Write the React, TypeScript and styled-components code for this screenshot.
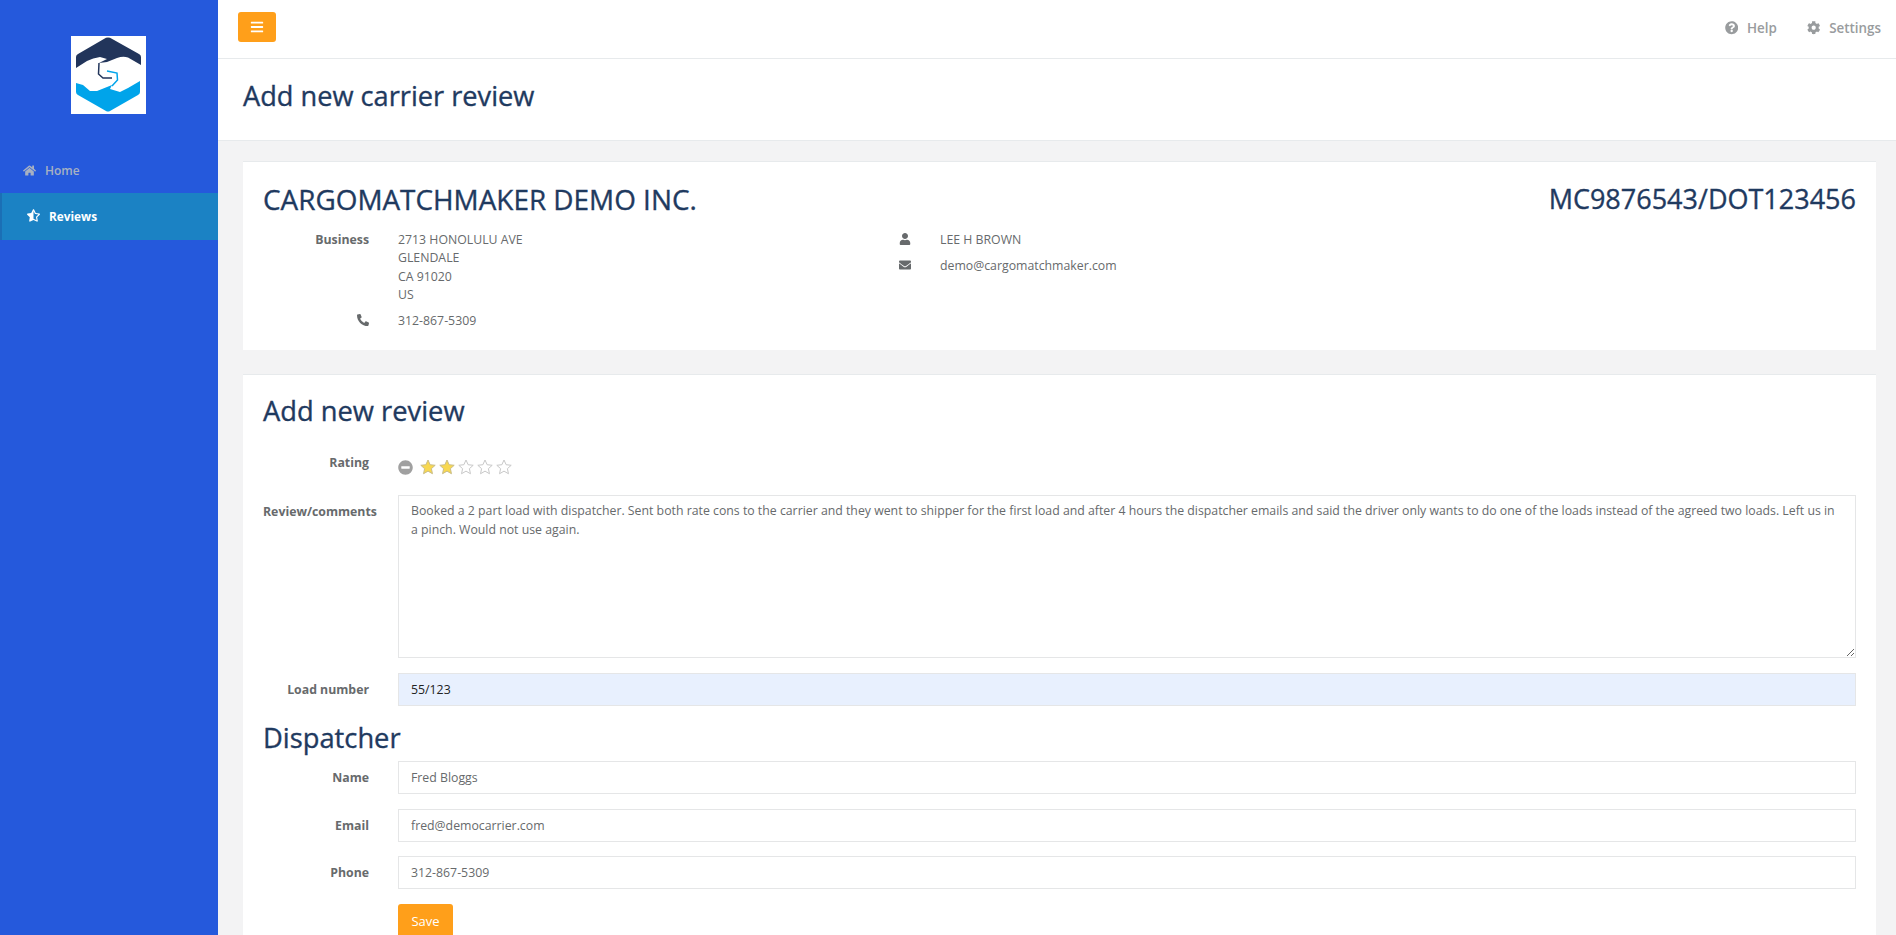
import React from "react";
import styled, { createGlobalStyle } from "styled-components";
import {
  FaBars,
  FaCog,
  FaEnvelope,
  FaHome,
  FaMinusCircle,
  FaPhoneAlt,
  FaQuestionCircle,
  FaStarHalfAlt,
  FaUser,
} from "react-icons/fa";

const GlobalStyle = createGlobalStyle`
  html, body {
    margin: 0;
    height: 100%;
    overflow: hidden;
  }
  body {
    font-family: "Open Sans", "Noto Sans", sans-serif;
    font-size: 12.3px;
    color: #676a6c;
    background: #f3f3f4;
  }
  * { box-sizing: border-box; }
`;

const Shell = styled.div`
  display: flex;
  height: 935px;
  overflow: hidden;
`;

const Sidebar = styled.nav`
  width: 218px;
  flex-shrink: 0;
  background: #2559dc;
`;

const LogoWrap = styled.div`
  display: flex;
  padding: 36px 0 0 71px;
  height: 148px;
`;

const LogoBox = styled.div`
  width: 75px;
  height: 78px;
  background: #fff;
  display: flex;
`;

const NavItem = styled.a<{ $active?: boolean }>`
  display: flex;
  align-items: center;
  height: ${(p) => (p.$active ? "47px" : "45px")};
  padding-left: ${(p) => (p.$active ? "25px" : "23px")};
  padding-bottom: ${(p) => (p.$active ? "2px" : "0")};
  gap: 9px;
  font-size: ${(p) => (p.$active ? "11.8px" : "12px")};
  font-weight: ${(p) => (p.$active ? 700 : 600)};
  color: ${(p) => (p.$active ? "#fff" : "#a7b1c2")};
  background: ${(p) => (p.$active ? "#1b82c4" : "transparent")};
  border-left: ${(p) => (p.$active ? "2px solid #1b6fb5" : "none")};
  svg {
    font-size: 13px;
  }
`;

const Main = styled.div`
  flex: 1;
  min-width: 0;
  display: flex;
  flex-direction: column;
`;

const TopBar = styled.header`
  height: 59px;
  flex-shrink: 0;
  background: #fff;
  border-bottom: 1px solid #e7eaec;
  display: flex;
  justify-content: space-between;
  padding: 12px 15px 0 20px;
`;

const MenuButton = styled.button`
  width: 38px;
  height: 30px;
  border: none;
  border-radius: 3px;
  background: #ff9f1a;
  color: #fff;
  font-size: 14px;
  display: flex;
  align-items: center;
  justify-content: center;
  padding: 0;
`;

const TopLinks = styled.div`
  display: flex;
  gap: 30px;
  padding-top: 8px;
`;

const TopLink = styled.a`
  display: flex;
  align-items: center;
  gap: 9px;
  height: 16px;
  font-size: 13.4px;
  font-weight: 600;
  color: #999c9e;
`;

const TitleBand = styled.div`
  height: 82px;
  flex-shrink: 0;
  background: #fff;
  border-bottom: 1px solid #e7eaec;
  padding: 0 0 0 25px;
  display: flex;
  align-items: center;
`;

const PageTitle = styled.h1`
  margin: 0 0 9px 0;
  font-size: 27.2px;
  font-weight: 400;
  -webkit-text-stroke: 0.35px #1f3a5f;
  color: #1f3a5f;
`;

const Content = styled.main`
  flex: 1;
  padding: 20px 20px 0 25px;
  display: flex;
  flex-direction: column;
  gap: 24px;
`;

const Card = styled.section`
  background: #fff;
  border-top: 1px solid #e7eaec;
  padding: 19px 20px 0 20px;
`;

const CompanyCard = styled(Card)`
  height: 189px;
`;

const FormCard = styled(Card)`
  flex: 1;
  padding-top: 18px;
`;

const HeadRow = styled.div`
  display: flex;
  justify-content: space-between;
  margin-bottom: 13.5px;
`;

const Heading = styled.h2<{ $size?: number }>`
  margin: 0;
  font-size: ${(p) => p.$size ?? 27.3}px;
  line-height: 36px;
  font-weight: 400;
  -webkit-text-stroke: 0.35px #1f3a5f;
  color: #1f3a5f;
`;

const ReviewHeading = styled(Heading)`
  margin-bottom: 17px;
`;

const DispatcherHeading = styled(Heading)`
  margin-bottom: 5px;
`;

const InfoGrid = styled.div`
  display: grid;
  grid-template-columns: 542px 1fr;
`;

const InfoColumn = styled.div`
  display: flex;
  flex-direction: column;
  gap: 7.5px;
`;

const InfoRow = styled.div`
  display: grid;
  grid-template-columns: 106px 1fr;
  column-gap: 29px;
  line-height: 18.6px;
`;

const InfoLabel = styled.div`
  text-align: right;
  font-weight: 700;
  svg {
    font-size: 12px;
    vertical-align: -1px;
  }
`;

const FieldRow = styled.div<{ $mb?: number }>`
  display: grid;
  grid-template-columns: 106px 1fr;
  column-gap: 29px;
  margin-bottom: ${(p) => p.$mb ?? 15}px;
`;

const FieldLabel = styled.label`
  text-align: right;
  font-weight: 700;
  white-space: nowrap;
  padding-top: 8px;
  line-height: 18px;
`;

const RatingBox = styled.div`
  display: flex;
  align-items: center;
  gap: 3px;
  height: 26px;
  margin-top: 8px;
  color: #a0a0a0;
  svg.clear {
    font-size: 15px;
    margin-right: 4px;
  }
`;

const Field = styled.input<{ $filled?: boolean }>`
  display: block;
  width: 100%;
  height: 33px;
  border: 1px solid #e5e6e7;
  padding: 0 12px;
  font: inherit;
  color: ${(p) => (p.$filled ? "#222" : "#676a6c")};
  background: ${(p) => (p.$filled ? "#e8f0fe" : "#fff")};
  outline: none;
`;

const Comments = styled.textarea`
  display: block;
  width: 100%;
  height: 163px;
  border: 1px solid #e5e6e7;
  padding: 6px 12px;
  font: inherit;
  line-height: 18.6px;
  color: #676a6c;
  background: #fff;
  outline: none;
`;

const SaveButton = styled.button`
  margin-left: 135px;
  width: 55px;
  height: 33px;
  border: none;
  border-radius: 3px;
  background: #ff9f1a;
  color: #fff;
  font: inherit;
  font-size: 13px;
  padding: 0;
`;

const Star = ({ on }: { on: boolean }) => (
  <svg width="16" height="16" viewBox="0 0 24 24">
    <path
      d="M12 1.5l3.2 7.1 7.6.8-5.7 5.1 1.6 7.6L12 18.2l-6.7 3.9 1.6-7.6-5.700-5.100 7.600-.8z"
      fill={on ? "#f8d850" : "#fff"}
      stroke={on ? "#c9bd8a" : "#c8c8c8"}
      strokeWidth="1.5"
      strokeLinejoin="round"
    />
  </svg>
);

const Logo = () => (
  <svg width="75" height="78" viewBox="0 0 75 78">
    <path
      d="M35 1.800 Q37 1 39 1.800 L68 18 Q70 19 70 21 L70 29 L57 21.500 Q52 20 46 22 L36 26 L28 27 L36 23 L29 21 Q22 22 16 25 L5 32 L5 21 Q5 19 7 18 Z"
      fill="#22355b"
    />
    <path
      d="M5 47 L12 49 L19 55 L26 55 L41 49 L39 53 L49 56 L57 52 L69 45 L69 56 Q69 58 67 59 L39 75 Q37 76 35 75 L7 59 Q5 58 5 56 Z"
      fill="#00a4ea"
    />
    <path d="M28 27 L27.500 38 L32 42 L41 42" fill="none" stroke="#22355b" strokeWidth="1.500" />
    <path d="M36 35 L46 37 L46.500 44 L41 50" fill="none" stroke="#00a4ea" strokeWidth="1.500" />
  </svg>
);

export default function App() {
  const comments =
    "Booked a 2 part load with dispatcher. Sent both rate cons to the carrier and they went to shipper for the first load and after 4 hours the dispatcher emails and said the driver only wants to do one of the loads instead of the agreed two loads. Left us in a pinch. Would not use again.";

  return (
    <Shell>
      <GlobalStyle />
      <Sidebar>
        <LogoWrap>
          <LogoBox>
            <Logo />
          </LogoBox>
        </LogoWrap>
        <NavItem>
          <FaHome />
          Home
        </NavItem>
        <NavItem $active>
          <FaStarHalfAlt />
          Reviews
        </NavItem>
      </Sidebar>
      <Main>
        <TopBar>
          <MenuButton>
            <FaBars />
          </MenuButton>
          <TopLinks>
            <TopLink>
              <FaQuestionCircle />
              Help
            </TopLink>
            <TopLink>
              <FaCog />
              Settings
            </TopLink>
          </TopLinks>
        </TopBar>
        <TitleBand>
          <PageTitle>Add new carrier review</PageTitle>
        </TitleBand>
        <Content>
          <CompanyCard>
            <HeadRow>
              <Heading $size={27.9}>CARGOMATCHMAKER DEMO INC.</Heading>
              <Heading $size={27}>MC9876543/DOT123456</Heading>
            </HeadRow>
            <InfoGrid>
              <InfoColumn>
                <InfoRow>
                  <InfoLabel>Business</InfoLabel>
                  <div>
                    2713 HONOLULU AVE
                    <br />
                    GLENDALE
                    <br />
                    CA 91020
                    <br />
                    US
                  </div>
                </InfoRow>
                <InfoRow>
                  <InfoLabel>
                    <FaPhoneAlt />
                  </InfoLabel>
                  <div>312-867-5309</div>
                </InfoRow>
              </InfoColumn>
              <InfoColumn>
                <InfoRow>
                  <InfoLabel>
                    <FaUser />
                  </InfoLabel>
                  <div>LEE H BROWN</div>
                </InfoRow>
                <InfoRow>
                  <InfoLabel>
                    <FaEnvelope />
                  </InfoLabel>
                  <div>demo@cargomatchmaker.com</div>
                </InfoRow>
              </InfoColumn>
            </InfoGrid>
          </CompanyCard>
          <FormCard>
            <ReviewHeading>Add new review</ReviewHeading>
            <FieldRow>
              <FieldLabel>Rating</FieldLabel>
              <RatingBox>
                <FaMinusCircle className="clear" />
                <Star on />
                <Star on />
                <Star on={false} />
                <Star on={false} />
                <Star on={false} />
              </RatingBox>
            </FieldRow>
            <FieldRow>
              <FieldLabel>Review/comments</FieldLabel>
              <Comments defaultValue={comments} />
            </FieldRow>
            <FieldRow $mb={14}>
              <FieldLabel>Load number</FieldLabel>
              <Field $filled defaultValue="55/123" />
            </FieldRow>
            <DispatcherHeading>Dispatcher</DispatcherHeading>
            <FieldRow>
              <FieldLabel>Name</FieldLabel>
              <Field defaultValue="Fred Bloggs" />
            </FieldRow>
            <FieldRow $mb={14}>
              <FieldLabel>Email</FieldLabel>
              <Field defaultValue="fred@democarrier.com" />
            </FieldRow>
            <FieldRow>
              <FieldLabel>Phone</FieldLabel>
              <Field defaultValue="312-867-5309" />
            </FieldRow>
            <SaveButton>Save</SaveButton>
          </FormCard>
        </Content>
      </Main>
    </Shell>
  );
}
